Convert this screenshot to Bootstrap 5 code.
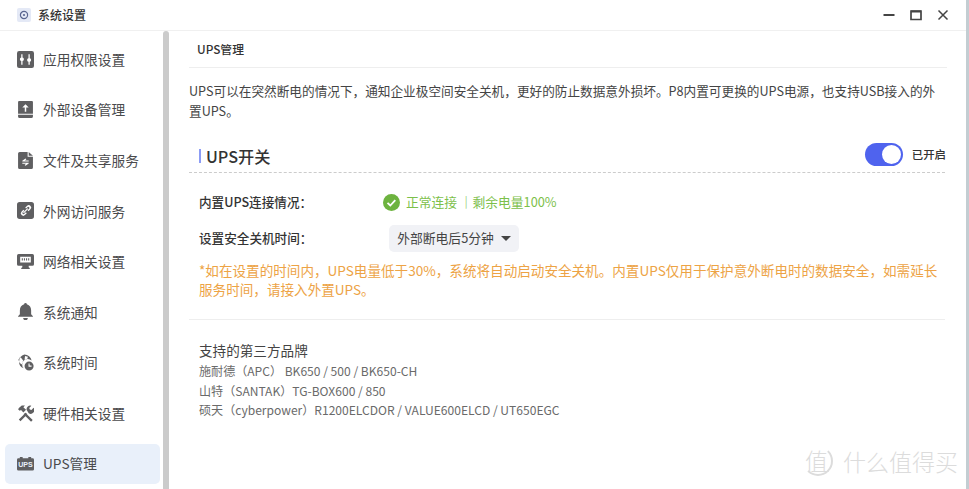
<!DOCTYPE html>
<html lang="zh">
<head>
<meta charset="utf-8">
<title>系统设置</title>
<link href="https://cdn.jsdelivr.net/npm/bootstrap@5.3.0/dist/css/bootstrap.min.css" rel="stylesheet">
<style>
html,body{height:489px;overflow:hidden;background:#fff}
body{font-family:"Noto Sans CJK SC","Noto Sans",sans-serif;color:#3c3c3e;font-size:13.7px;position:relative}
.outerwrap{height:489px}
.leftwrap{flex:1;min-width:0}
.winbar{height:31px;border-bottom:1px solid #f0f0f0;padding-left:17px;padding-right:17px}
.winlogo{width:14px;height:14px;background:#e4e9f6;border-radius:2px}
.wintitle{font-size:12px;margin-left:7px;color:#333;font-weight:500}
.winbtns{gap:15px;color:#444}
.shell{height:458px}
.sidepane{width:163px;padding:8px 3px 0 5px;flex:none}
.sideitem{height:40px;margin-bottom:10.6px;padding-left:12px;border-radius:5px;color:#4a4a4c;gap:9px;font-size:13.7px;white-space:nowrap}
.sideitem.sel{background:#e9f0fa}
.sideitem svg{flex:none;width:17px;height:17px;fill:#5f5f61}
.upsword{font-family:"Liberation Sans",sans-serif;font-size:7.5px;font-weight:700;fill:#e9f0fa}
.scrollthumb{width:6px;background:#cbcbcb;flex:none;border-radius:3px 3px 0 0}
.mainpane{flex:1;padding:0 21px 0 20px;position:relative}
.pagehead{height:37px;border-bottom:1px solid #eee;padding-left:8px;font-size:11.8px;font-weight:500;color:#333;margin-right:-2px}
.intro{margin:13px 0 0;line-height:20px;font-size:12.65px;color:#444}
.sechead{height:30px;margin-top:22px;border-bottom:1px dashed #ccc}
.sectitle{font-size:16.2px;font-weight:500;color:#333;border-left:2px solid #8c9cf5;padding-left:5px;line-height:14px;margin:6px 0 0 10px}
.togglewrap{margin-right:-1px;margin-left:1px}
.togglepill{width:38px;height:23px;border-radius:12px;background:#4f63ee;padding:2px;justify-content:flex-end}
.toggleknob{width:19px;height:19px;border-radius:50%;background:#fff}
.togglelabel{font-size:11.4px;font-weight:500;color:#333;margin-left:9px}
.statusrow{height:36px;padding-left:10px}
.firstrow{margin-top:11px}
.rowlabel{width:184px;font-size:12.6px;font-weight:500;color:#333}
.okstate{color:#7cc04a;font-size:12.75px;gap:6px}
.okdot{width:17px;height:17px;flex:none}
.pickbtn{background:#f1f2f6;border-radius:5px;height:27px;width:130px;font-size:12.8px;color:#444;border:0;padding:0 8px;gap:7px;margin-left:6px}
.pickbtn::after{margin-left:0;border-top-width:5px;border-left-width:5px;border-right-width:5px;vertical-align:middle}
.warntext{color:#eda345;font-size:13.58px;line-height:19px;margin:5px 0 0;padding-left:10px}
.partition{border-top:1px solid #eee;margin-top:20px}
.brands{padding:19px 0 0 10px;font-size:12.07px;color:#6a6a6a;line-height:19.5px}
.brandhead{font-size:13.6px;color:#444;line-height:22px}
.edgeband{width:3px;flex:none;background:#c3cdd2}
.wmark{position:absolute;right:11px;bottom:13px;color:#dcdcdc;font-size:23px;line-height:30px;gap:10px;font-weight:300}
.wmarkc{width:30px;height:30px;border:2px solid #dcdcdc;border-left-color:transparent;border-top-color:transparent;border-radius:50%;font-size:23px;line-height:25px;text-align:left}
</style>
</head>
<body>
<div class="outerwrap d-flex">
<div class="leftwrap">
<div class="winbar d-flex align-items-center">
  <span class="winlogo d-flex align-items-center justify-content-center">
    <svg width="10" height="10" viewBox="0 0 10 10"><circle cx="5" cy="5" r="3.600" fill="none" stroke="#5a6690" stroke-width="1.200"/><circle cx="5" cy="5" r="1.100" fill="#5a6690"/></svg>
  </span>
  <span class="wintitle">系统设置</span>
  <div class="winbtns d-flex align-items-center ms-auto">
    <svg width="12" height="12" viewBox="0 0 12 12"><rect x="0.500" y="5" width="11" height="2" fill="#444"/></svg>
    <svg width="12" height="12" viewBox="0 0 12 12"><path d="M1 2h10v8.500H1z" fill="none" stroke="#444" stroke-width="1.700"/><rect x="1" y="1.500" width="10" height="2" fill="#444"/></svg>
    <svg width="12" height="12" viewBox="0 0 12 12"><path d="M1.500 1.500l9 9M10.500 1.500l-9 9" stroke="#444" stroke-width="1.500" fill="none"/></svg>
  </div>
</div>
<div class="shell d-flex">
  <nav class="sidepane">
    <div class="sideitem d-flex align-items-center"><svg viewBox="0 0 16 16"><path fill-rule="evenodd" d="M2 0h12a2 2 0 0 1 2 2v12a2 2 0 0 1-2 2H2a2 2 0 0 1-2-2V2a2 2 0 0 1 2-2zM4 3v3a1.700 1.700 0 0 0 0 3.300V13h1.200V9.300a1.700 1.700 0 0 0 0-3.300V3zM10.800 3v3.800a1.700 1.700 0 0 0 0 3.300V13H12v-2.900a1.700 1.700 0 0 0 0-3.300V3z"/></svg><span>应用权限设置</span></div>
    <div class="sideitem d-flex align-items-center"><svg viewBox="0 0 16 16"><path fill-rule="evenodd" d="M2 0h12a1 1 0 0 1 1 1v11H1V1a1 1 0 0 1 1-1zM8 3L5 6.200h2.300V10h1.400V6.200H11zM1 13h14v1.500a1.500 1.500 0 0 1-1.500 1.500h-11A1.500 1.500 0 0 1 1 14.500z"/></svg><span>外部设备管理</span></div>
    <div class="sideitem d-flex align-items-center"><svg viewBox="0 0 16 16"><path fill-rule="evenodd" d="M2.500 0H10v4.500h5V14.500a1.500 1.500 0 0 1-1.500 1.500h-11A1.500 1.500 0 0 1 1 14.500v-13A1.500 1.500 0 0 1 2.500 0zM11 0l4 3.500h-4zM8 6L5 8.200v.8h6V8H7.500L8.800 6.800zM5 10v1h3.500L7.200 12.200 8 13l3-2.200V10z"/></svg><span>文件及共享服务</span></div>
    <div class="sideitem d-flex align-items-center"><svg viewBox="0 0 16 16"><path fill-rule="evenodd" d="M2.500 0h11A2.500 2.500 0 0 1 16 2.500v11a2.500 2.500 0 0 1-2.500 2.500h-11A2.500 2.500 0 0 1 0 13.500v-11A2.500 2.500 0 0 1 2.500 0zM9.500 3.500L7.700 5.300l.9.9 1.500-1.500a1.100 1.100 0 0 1 1.500 1.500L10 7.800l.9.9 1.700-1.800a2.300 2.300 0 0 0-3.100-3.400zM6 7.300L4.200 9.100a2.300 2.300 0 0 0 3.300 3.200l1.700-1.700-.9-.9-1.600 1.600a1.100 1.100 0 0 1-1.500-1.500l1.700-1.600zM9.700 5.900L5.700 9.900l.8.8 4-4z"/></svg><span>外网访问服务</span></div>
    <div class="sideitem d-flex align-items-center"><svg viewBox="0 0 16 16"><path fill-rule="evenodd" d="M1.500 1h13A1.500 1.500 0 0 1 16 2.500v8a1.500 1.500 0 0 1-1.500 1.500H11v1.500l1 .5v1H4v-1l1-.5V12H1.500A1.500 1.500 0 0 1 0 10.500v-8A1.500 1.500 0 0 1 1.500 1zM3 3.500V9h10V3.500zM4.500 5h1v2h-1zM6.500 5h1v2h-1zM8.500 5h1v2h-1zM10.500 5h1v2h-1z"/></svg><span>网络相关设置</span></div>
    <div class="sideitem d-flex align-items-center"><svg viewBox="0 0 16 16"><path d="M8 0a1.300 1.300 0 0 1 1.300 1.200C12 2 13.300 4.200 13.300 7v3.500l1.700 2V13H1v-.5l1.700-2V7c0-2.800 1.300-5 4-5.800A1.300 1.300 0 0 1 8 0zM5.800 14h4.400a2.200 2.200 0 0 1-4.400 0z"/></svg><span>系统通知</span></div>
    <div class="sideitem d-flex align-items-center"><svg viewBox="0 0 18 18"><path fill-rule="evenodd" d="M7.800.5a7.800 7.800 0 0 1 7.700 6.500 5.500 5.500 0 0 0-8.400 8.200A7.800 7.800 0 0 1 7.800.5zM3.500 3 1.500 6l1.500 3.500 2 1.500 1.500-4zM8.500 2 8 6l3-1 .5-2z"/><path fill-rule="evenodd" d="M12.800 8a4.800 4.800 0 1 1 0 9.600 4.800 4.800 0 0 1 0-9.600zM12.200 10v3.400h3.200v-1.100h-2.100V10z"/></svg><span>系统时间</span></div>
    <div class="sideitem d-flex align-items-center"><svg viewBox="0 0 16 16"><path d="M2.500 14.500 9 8M7 8l7 7" fill="none" stroke="#5f5f61" stroke-width="2.200"/><path d="M2 2.500 4.500.5h3L6 2l2.500 2.500L6 7 3.800 4.800 2.500 5.500 1 4zM9 4.500A3.500 3.500 0 0 1 13.500.7L11.500 2.800l.6 1.400 1.500.5 2-2A3.500 3.500 0 0 1 11 7.800z"/></svg><span>硬件相关设置</span></div>
    <div class="sideitem sel d-flex align-items-center"><svg viewBox="0 0 18 16"><path d="M3 1h3v1.500h6V1h3v1.500h1.500A1.500 1.500 0 0 1 18 4v10a1.500 1.500 0 0 1-1.500 1.500h-15A1.500 1.500 0 0 1 0 14V4a1.500 1.500 0 0 1 1.500-1.500H3z"/><text class="upsword" x="9" y="12" text-anchor="middle">UPS</text></svg><span>UPS管理</span></div>
  </nav>
  <div class="scrollthumb"></div>
  <main class="mainpane">
    <div class="pagehead d-flex align-items-center">UPS管理</div>
    <p class="intro">UPS可以在突然断电的情况下，通知企业极空间安全关机，更好的防止数据意外损坏。P8内置可更换的UPS电源，也支持USB接入的外置UPS。</p>
    <div class="sechead d-flex align-items-start justify-content-between">
      <span class="sectitle">UPS开关</span>
      <div class="togglewrap d-flex align-items-center">
        <span class="togglepill d-flex"><span class="toggleknob"></span></span>
        <span class="togglelabel">已开启</span>
      </div>
    </div>
    <div class="statusrow firstrow d-flex align-items-center">
      <span class="rowlabel">内置UPS连接情况：</span>
      <span class="okstate d-flex align-items-center">
        <svg class="okdot" viewBox="0 0 17 17"><circle cx="8.500" cy="8.500" r="8.500" fill="#6db33f"/><path d="M4.500 8.800l2.800 2.700 5-5.300" fill="none" stroke="#fff" stroke-width="1.800"/></svg>
        <span>正常连接 ｜剩余电量100%</span>
      </span>
    </div>
    <div class="statusrow d-flex align-items-center">
      <span class="rowlabel">设置安全关机时间：</span>
      <button type="button" class="pickbtn dropdown-toggle d-flex align-items-center justify-content-center">外部断电后5分钟</button>
    </div>
    <p class="warntext">*如在设置的时间内，UPS电量低于30%，系统将自动启动安全关机。内置UPS仅用于保护意外断电时的数据安全，如需延长服务时间，请接入外置UPS。</p>
    <div class="partition"></div>
    <div class="brands">
      <div class="brandhead">支持的第三方品牌</div>
      <div>施耐德（APC） BK650 / 500 / BK650-CH</div>
      <div>山特（SANTAK）TG-BOX600 / 850</div>
      <div>硕天（cyberpower）R1200ELCDOR / VALUE600ELCD / UT650EGC</div>
    </div>
  </main>
</div>
</div>
<div class="edgeband"></div>
</div>
<div class="wmark d-flex align-items-center"><span class="wmarkc">值</span><span>什么值得买</span></div>
<script src="https://cdn.jsdelivr.net/npm/bootstrap@5.3.0/dist/js/bootstrap.bundle.min.js"></script>
</body>
</html>
